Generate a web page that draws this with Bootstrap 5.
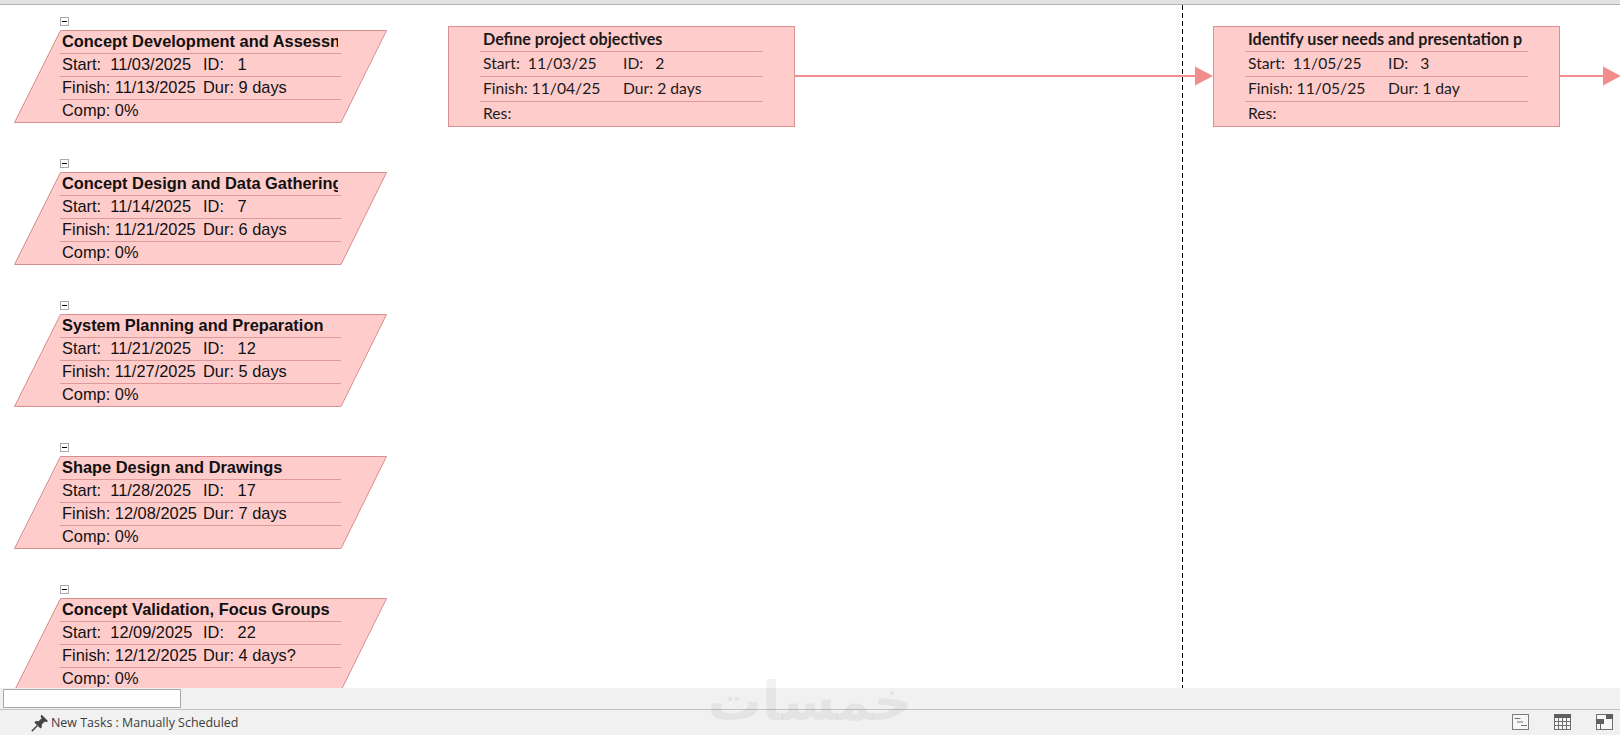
<!DOCTYPE html>
<html lang="en">
<head>
  <meta charset="UTF-8">
  <meta name="viewport" content="width=device-width, initial-scale=1.0">
  <title>Network Diagram</title>
  <link href="https://cdn.jsdelivr.net/npm/bootstrap@5.3.0/dist/css/bootstrap.min.css" rel="stylesheet">
  <style>
    html, body { height: 100%; overflow: hidden; background: #fff; }
    .top-strip { height: 5px; background: #e2e2e2; border-bottom: 1px solid #b4b4b4; }
    .diagram { height: 683px; overflow: hidden; }
    .links { left: 0; top: 0; }

    .summary-node { left: 14px; width: 374px; height: 93px; color: #111; font: 16.4px/20.5px "Liberation Sans", Arial, sans-serif; }
    .summary-shape { left: 0; top: 0; }
    .summary-rows { left: 46px; top: 0; width: 281px; }
    .summary-rows .node-title { line-height: 22px; }
    .toggle { left: 46px; top: -13px; width: 9px; height: 9px; border: 1px solid #a9a9a9; background: #fff; }
    .toggle::after { content: ""; position: absolute; left: 1px; right: 1px; top: 3px; height: 1px; background: #000; }

    .task-node { top: 21px; width: 347px; height: 101px; background: #ffcccc; border: 1px solid #db9090; color: #1b1b1b; font: 15.7px/23.5px Lato, sans-serif; }
    .task-rows { left: 31px; top: 0; width: 283px; }

    .node-row { height: 23px; padding-left: 2px; white-space: pre; border-bottom: 1px solid #dd9a9a; }
    .node-row:first-child { height: 24px; }
    .node-row:last-child { border-bottom: 0; }
    .task-rows .node-row { height: 25px; padding-left: 3px; }
    .node-title { font-weight: 700; }
    .title-clip { overflow: hidden; width: 276px; }
    .task-rows .title-clip { width: 274px; font-size: 16.1px; }
    .left-cell { width: 141px; }
    .task-rows .left-cell { width: 140px; }

    .scroll-row { height: 22px; background: #f1f1f1; border-bottom: 1px solid #c2c2c2; padding: 1px 0 1px 3px; }
    .scroll-box { width: 178px; height: 19px; background: #fff; border: 1px solid #a8a8a8; }
    .status-row { height: 25px; background: #f1f1f1; color: #3c3c3c; font: 12.45px/27px "Open Sans", sans-serif; padding-left: 31px; padding-right: 7px; }
    .status-text { margin-left: -2px; }
    .view-icons { gap: 25px; }
    .watermark { left: 0; right: 0; top: 667px; text-align: center; color: rgba(0, 0, 0, .05); font: 700 54px/70px "DejaVu Sans", sans-serif; pointer-events: none; }
  </style>
</head>
<body>
  <div class="d-flex flex-column vh-100 position-relative">
    <div class="top-strip"></div>

    <!-- network diagram -->
    <div id="diagram" class="diagram position-relative">
      <svg class="links position-absolute" width="1620" height="683">
        <line x1="795" y1="71" x2="1196" y2="71" stroke="#f28d8d" stroke-width="2"/>
        <polygon points="1195,61.5 1213,71 1195,80.5" fill="#f28d8d"/>
        <line x1="1560" y1="71" x2="1604" y2="71" stroke="#f28d8d" stroke-width="2"/>
        <polygon points="1603,61.5 1621,71 1603,80.5" fill="#f28d8d"/>
        <line x1="1182.5" y1="0" x2="1182.5" y2="683" stroke="#000" stroke-width="1" stroke-dasharray="5 3"/>
      </svg>
    </div>

    <div class="scroll-row"><div class="scroll-box"></div></div>

    <div class="status-row d-flex align-items-center justify-content-between">
      <div class="d-flex align-items-center gap-1">
        <svg width="18" height="18" viewBox="0 0 18 18">
          <path d="M10.5 .5 L17 7 L15.4 8.2 L13.8 7.4 L10.8 10.4 L10.8 13.2 L9.4 14.4 L3.4 8.4 L4.8 7 L7.6 7.2 L10.6 4.2 L9.6 2.4 Z" fill="#454545"/>
          <path d="M6.4 11.4 L.8 17.2" stroke="#454545" stroke-width="1.5"/>
        </svg>
        <span class="status-text">New Tasks : Manually Scheduled</span>
      </div>
      <div class="view-icons d-flex align-items-center">
        <svg width="17" height="17" viewBox="0 0 17 17">
          <rect x=".5" y=".5" width="16" height="15" fill="#f7f7f7" stroke="#7b7b7b"/>
          <path d="M2.5 4.5h6M5 8h6M9 11.5h6" stroke="#707070" stroke-width="1.2"/>
        </svg>
        <svg width="17" height="17" viewBox="0 0 17 17">
          <rect x=".5" y=".5" width="16" height="15" fill="#f7f7f7" stroke="#6f6f6f"/>
          <rect x="0" y="0" width="17" height="4" fill="#5f5f5f"/>
          <path d="M4.5 4v11M8.5 4v11M12.5 4v11M1 7.5h15M1 11.5h15" stroke="#6f6f6f" stroke-width="1"/>
        </svg>
        <svg width="17" height="17" viewBox="0 0 17 17">
          <rect x=".5" y=".5" width="16" height="15" fill="#f7f7f7" stroke="#6f6f6f"/>
          <rect x="10" y="0" width="7" height="5" fill="#5f5f5f"/>
          <rect x="0" y="5" width="8" height="5" fill="#5f5f5f"/>
          <rect x="4" y="10" width="1" height="6" fill="#5f5f5f"/>
        </svg>
      </div>
    </div>

    <div class="watermark position-absolute" dir="rtl" lang="ar">خمسات</div>
  </div>

  <script src="https://cdn.jsdelivr.net/npm/bootstrap@5.3.0/dist/js/bootstrap.bundle.min.js"></script>
  <script>
    const summaries = [
      { name: "Concept Development and Assessn", start: "11/03/2025", finish: "11/13/2025", id: "1", dur: "9 days" },
      { name: "Concept Design and Data Gathering", start: "11/14/2025", finish: "11/21/2025", id: "7", dur: "6 days" },
      { name: "System Planning and Preparation", start: "11/21/2025", finish: "11/27/2025", id: "12", dur: "5 days" },
      { name: "Shape Design and Drawings", start: "11/28/2025", finish: "12/08/2025", id: "17", dur: "7 days" },
      { name: "Concept Validation, Focus Groups", start: "12/09/2025", finish: "12/12/2025", id: "22", dur: "4 days?" }
    ];
    const tasks = [
      { name: "Define project objectives", start: "11/03/25", finish: "11/04/25", id: "2", dur: "2 days", x: 448 },
      { name: "Identify user needs and presentation p", start: "11/05/25", finish: "11/05/25", id: "3", dur: "1 day", x: 1213 }
    ];

    function rows(n, last) {
      return `
        <div class="node-row node-title"><div class="title-clip">${n.name}</div></div>
        <div class="node-row d-flex"><span class="left-cell">Start:  ${n.start}</span><span>ID:   ${n.id}</span></div>
        <div class="node-row d-flex"><span class="left-cell">Finish: ${n.finish}</span><span>Dur: ${n.dur}</span></div>
        <div class="node-row">${last}</div>`;
    }

    const diagram = document.getElementById("diagram");
    let html = "";
    summaries.forEach((n, i) => {
      html += `<div class="summary-node position-absolute" style="top:${25 + i * 142}px">
        <div class="toggle position-absolute"></div>
        <svg class="summary-shape position-absolute" width="374" height="93">
          <polygon points="46.5,.5 372.5,.5 327,92.5 .5,92.5" fill="#ffcccc" stroke="#d98e8e"/>
        </svg>
        <div class="summary-rows position-absolute">${rows(n, "Comp: 0%")}</div>
      </div>`;
    });
    tasks.forEach(n => {
      html += `<div class="task-node position-absolute" style="left:${n.x}px">
        <div class="task-rows position-absolute">${rows(n, "Res:")}</div>
      </div>`;
    });
    diagram.insertAdjacentHTML("beforeend", html);
  </script>
</body>
</html>
